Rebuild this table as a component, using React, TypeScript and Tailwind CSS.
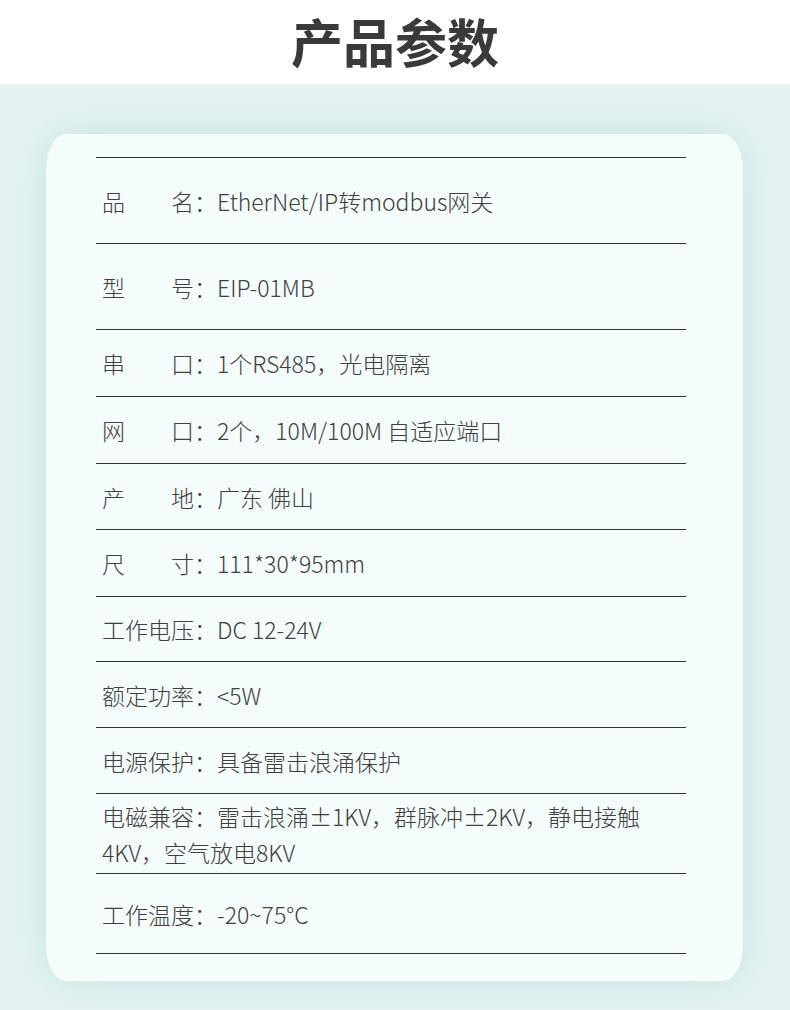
const specs: { label: string; value: string; h: string }[] = [
  { label: '品名', value: 'EtherNet/IP转modbus网关', h: 'h-[86px]' },
  { label: '型号', value: 'EIP-01MB', h: 'h-[86px]' },
  { label: '串口', value: '1个RS485，光电隔离', h: 'h-[67px]' },
  { label: '网口', value: '2个，10M/100M 自适应端口', h: 'h-[67px]' },
  { label: '产地', value: '广东 佛山', h: 'h-[66px]' },
  { label: '尺寸', value: '111*30*95mm', h: 'h-[67px]' },
  { label: '工作电压', value: 'DC 12-24V', h: 'h-[65px]' },
  { label: '额定功率', value: '<5W', h: 'h-[66px]' },
  { label: '电源保护', value: '具备雷击浪涌保护', h: 'h-[66px]' },
  { label: '电磁兼容', value: '雷击浪涌±1KV，群脉冲±2KV，静电接触4KV，空气放电8KV', h: 'h-[80px]' },
  { label: '工作温度', value: '-20~75°C', h: 'h-[80px]' },
];

const font = { fontFamily: '"Noto Sans CJK SC", "Noto Sans", sans-serif' };

export default function App() {
  return (
    <div className="w-[790px] h-[1010px] overflow-hidden bg-white" style={font}>
      <header className="h-[84px] flex items-center justify-center">
        <h1 className="text-[52px] font-bold text-[#3a3a3a] leading-none -mt-[3px]">产品参数</h1>
      </header>

      <section className="h-[926px] bg-[#e5f3f3] pt-[50px] pl-[46px]">
        <div className="w-[697px] h-[847px] bg-[#f5fcfc] rounded-[20px/36px] shadow-[0_0_40px_rgba(160,205,205,0.45)] pt-[23px] pl-[50px]">
          <div className="w-[590px] border-t border-[#333]">
            {specs.map((s) => (
              <div
                key={s.label}
                className={`${s.h} border-b border-[#333] pl-[6px] pr-[4px] flex items-center text-[23px] font-light leading-[36px] text-[#404040]`}
              >
                <p>
                  {s.label.length === 2 ? (
                    <span className="inline-flex w-[92px] justify-between">
                      <span>{s.label[0]}</span>
                      <span>{s.label[1]}</span>
                    </span>
                  ) : (
                    <span>{s.label}</span>
                  )}
                  <span>：</span>
                  {s.value}
                </p>
              </div>
            ))}
          </div>
        </div>
      </section>
    </div>
  );
}
